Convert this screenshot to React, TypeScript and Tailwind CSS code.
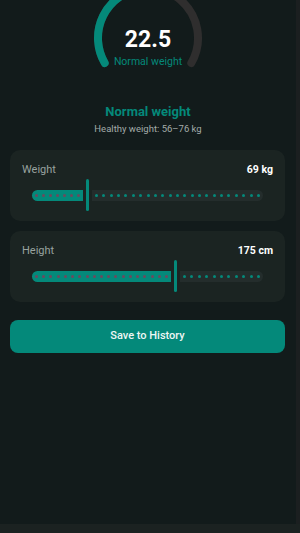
import React from 'react';

const TEAL = '#04897a';
const TRACK_W = 231;

// point on the gauge circle, angle in degrees clockwise from +x (svg coords)
const pt = (a: number, r = 50, c = 56) => {
    const rad = (a * Math.PI) / 180;
    return `${(c + r * Math.cos(rad)).toFixed(2)} ${(c + r * Math.sin(rad)).toFixed(2)}`;
};

const arc = (from: number, to: number) =>
    `M ${pt(from)} A 50 50 0 ${to - from > 180 ? 1 : 0} 1 ${pt(to)}`;

const Dots: React.FC<{ count: number; color: string }> = ({ count, color }) => (
    <div className="flex h-full items-center justify-between px-[3px]">
        {Array.from({ length: count }).map((_, i) => (
            <span key={i} className="block h-[3px] w-[3px] rounded-full" style={{ backgroundColor: color }} />
        ))}
    </div>
);

interface SliderCardProps {
    label: string;
    value: string;
    frac: number;
}

const SliderCard: React.FC<SliderCardProps> = ({ label, value, frac }) => {
    const fillW = Math.round(frac * TRACK_W - 4.5);
    const restW = TRACK_W - fillW - 9;
    return (
        <div className="rounded-[10px] bg-[#1b2422] pt-[13px] pb-[10px]">
            <div className="flex items-center justify-between px-[12px]">
                <span className="text-[11px] leading-[14px] text-[#98a29f]">{label}</span>
                <span className="text-[10.5px] font-bold leading-[14px] text-white">{value}</span>
            </div>
            <div className="mt-[2px] flex h-[32px] items-center px-[22px]">
                <div className="h-[11px] rounded-l-full rounded-r-[2px] bg-[#04897a]" style={{ width: fillW }}>
                    <Dots count={Math.max(2, Math.round(fillW / 7.3))} color="#6b4a5e" />
                </div>
                <div className="ml-[3px] h-[32px] w-[3px] rounded-[2px] bg-[#04897a]" />
                <div className="ml-[3px] h-[11px] rounded-r-full rounded-l-[2px] bg-[#242d2c]" style={{ width: restW }}>
                    <Dots count={Math.max(2, Math.round(restW / 7.3))} color={TEAL} />
                </div>
            </div>
        </div>
    );
};

export default function App() {
    return (
        <div className="flex h-[533px] w-[300px] flex-col overflow-hidden bg-[#121b1b] font-['Roboto','Liberation_Sans',sans-serif]">
            <div className="flex min-h-0 flex-1">
                <div className="flex w-[296px] flex-col px-[10px]">
                    {/* BMI gauge, top of it scrolled away */}
                    <div className="relative mx-auto -mt-[18px] h-[112px] w-[112px]">
                        <svg width="112" height="112" viewBox="0 0 112 112">
                            <path d={arc(150, 390)} fill="none" stroke="#2f2e2e" strokeWidth="8" strokeLinecap="round" />
                            <path d={arc(150, 262)} fill="none" stroke={TEAL} strokeWidth="8" strokeLinecap="round" />
                        </svg>
                        <div className="absolute inset-x-0 top-[45px] flex flex-col items-center">
                            <span className="text-[23px] font-bold leading-[26px] text-white">22.5</span>
                            <span className="mt-[2px] text-[10.5px] leading-[13px] text-[#04897a]">Normal weight</span>
                        </div>
                    </div>

                    <div className="mt-[10px] text-center text-[13px] font-bold leading-[16px] text-[#04897a]">Normal weight</div>
                    <div className="mt-[2px] text-center text-[9.5px] leading-[14px] text-[#a3aba9]">Healthy weight: 56–76 kg</div>

                    <div className="mt-[14px] flex flex-col gap-[10px] pr-[1px]">
                        <SliderCard label="Weight" value="69 kg" frac={0.24} />
                        <SliderCard label="Height" value="175 cm" frac={0.621} />
                    </div>

                    <button className="mt-[18px] mr-[1px] h-[33px] rounded-[8px] bg-[#04897a] text-[11px] font-medium text-[#eef6f4]">
                        Save to History
                    </button>
                </div>
                <div className="w-[4px] bg-[#1b1f20]" />
            </div>
            <div className="h-[9px] bg-[#1b2221]" />
        </div>
    );
}
